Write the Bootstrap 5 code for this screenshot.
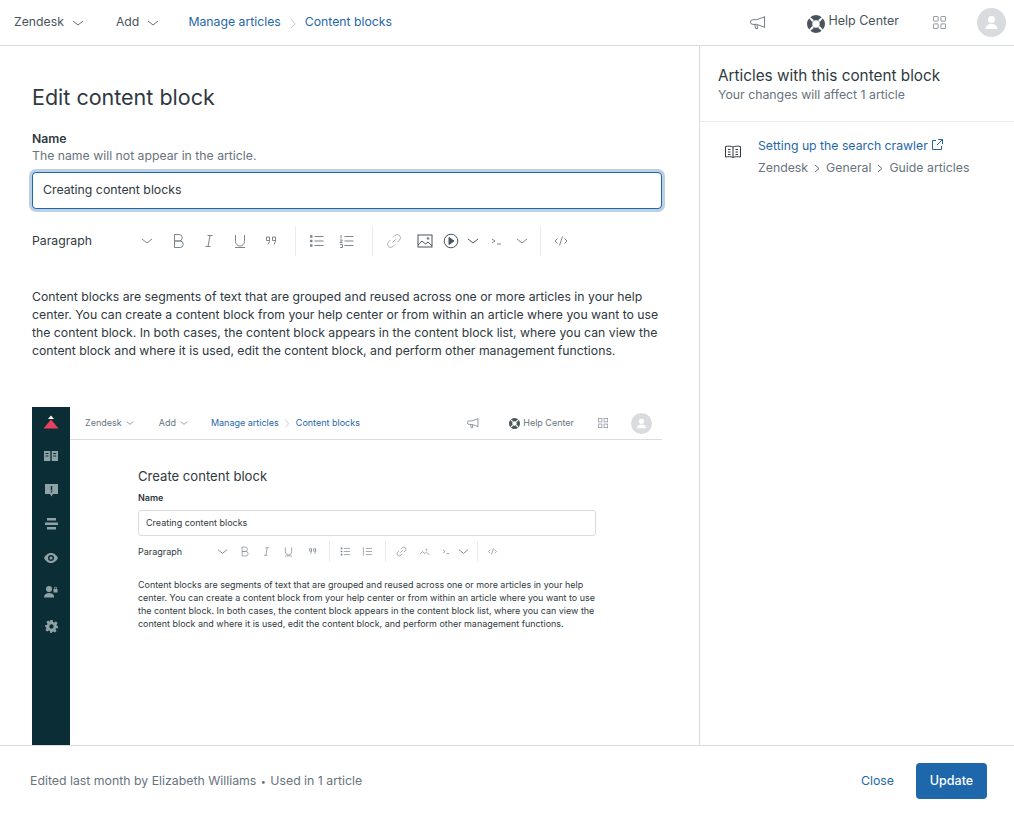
<!DOCTYPE html>
<html lang="en">
<head>
  <meta charset="UTF-8">
  <title>Edit content block</title>
  <link href="https://cdn.jsdelivr.net/npm/bootstrap@5.3.2/dist/css/bootstrap.min.css" rel="stylesheet">
  <style>
    html, body { height: 100%; }
    body { font-family: Inter, "Liberation Sans", sans-serif; font-size: 12.25px; color: #2f3941; overflow: hidden; }
    a { text-decoration: none; color: #1f67ab; }
    svg { display: block; flex: none; fill: none; stroke: currentColor; stroke-width: 1; }

    .topbar { height: 46px; border-bottom: 1px solid #d8dcde; color: #49545c; padding-left: 14px; padding-right: 8px; }
    .topbar .chev { width: 12px; height: 12px; color: #68737d; }
    .crumb-sep { color: #c2c8cc; width: 8px; height: 12px; }
    .avatar { width: 29px; height: 29px; border-radius: 50%; background: #d8dcde; color: #fff; }
    .buoy { fill: #49545c; stroke: none; }
    .grid-ico { color: #87929d; }

    .page-body { height: 699px; }
    .editor-col { width: 700px; border-right: 1px solid #d8dcde; padding: 37px 37px 0 32px; }
    .page-title { font-size: 21.5px; font-weight: 400; line-height: 28px; margin: 0 0 20px; }
    .field-label { font-weight: 600; line-height: 16px; }
    .field-hint { color: #68737d; line-height: 16px; margin-top: 1px; margin-bottom: 8px; }
    .name-input.form-control { height: 37px; border: 1px solid #1f67ab; border-radius: 4px; box-shadow: 0 0 0 3px rgba(31,103,171,.3); font-size: 12.3px; color: #2f3941; padding: 0 10px 2px; }

    .edit-tools { height: 30px; margin-top: 17px; color: #7a858e; }
    .edit-tools .para { width: 108px; color: #2f3941; }
    .tool-sep { width: 1px; height: 30px; background: #e9ebed; }
    .ico { width: 16px; height: 16px; }
    .body-copy { line-height: 18px; margin: 32px 0 0; }

    .shot { height: 338px; margin-top: 47px; overflow: hidden; }
    .shot-rail { width: 38px; background: #0b2e36; color: #8fa2a6; }
    .shot-rail svg { stroke: none; fill: currentColor; }
    .rail-slot { height: 34px; }
    .rail-slot.rail-logo { height: 30px; margin-bottom: 2px; }
    .shot-bar { height: 33px; border-bottom: 1px solid #d8dcde; color: #68737d; font-size: 9px; padding-left: 15px; }
    .shot-bar a { color: #1f67ab; }
    .shot-avatar { width: 21px; height: 21px; border-radius: 50%; background: #d8dcde; color: #fff; margin-right: 10px; }
    .shot-form { padding: 27px 0 0 68px; width: 526px; }
    .shot-title { font-size: 13.1px; line-height: 18px; margin: 0 0 7px; font-weight: 400; }
    .shot-label { font-size: 9px; font-weight: 600; line-height: 12px; margin-bottom: 6px; }
    .shot-input { height: 26px; border: 1px solid #d8dcde; border-radius: 3px; font-size: 9px; padding-left: 7px; }
    .shot-tools { height: 21px; margin-top: 5px; font-size: 9px; color: #7a858e; }
    .shot-tools .ico { width: 11px; height: 11px; }
    .shot-tools .tool-sep { height: 21px; }
    .shot-copy { font-size: 8.95px; line-height: 13px; margin: 16px 0 0; color: #2f3941; white-space: nowrap; }

    .side-col { width: 314px; }
    .side-head { padding: 19px 18px 0 18px; border-bottom: 1px solid #e9ebed; height: 76px; }
    .side-title { font-size: 15.3px; line-height: 21px; font-weight: 400; margin: 0 0 1px; }
    .side-sub { color: #68737d; font-size: 12.3px; line-height: 16px; }
    .side-item { padding: 15px 0 0 25px; }
    .side-path { color: #68737d; font-size: 12.3px; line-height: 16px; margin-top: 5px; }
    .side-path svg { margin: 0 6px; }

    .footbar { height: 69px; border-top: 1px solid #d8dcde; color: #68737d; font-size: 12.3px; padding: 2px 27px 0 30px; }
    .foot-dot { font-size: 9px; margin: 0 1px; }
    .btn.btn-update { background: #1f67ab; border: 0; color: #fff; font-size: 12.5px; font-weight: 500; width: 71px; height: 36px; border-radius: 4px; padding: 0; }
    .btn-close-link { color: #1f67ab; font-size: 12.3px; }
  </style>
</head>
<body class="bg-white">

  <!-- top nav -->
  <div class="topbar d-flex align-items-center">
    <span>Zendesk</span>
    <svg class="chev ms-2" viewBox="0 0 12 12"><path d="M1 4l5 4 5-4"/></svg>
    <span style="margin-left:32px">Add</span>
    <svg class="chev ms-2" viewBox="0 0 12 12"><path d="M1 4l5 4 5-4"/></svg>
    <a href="#" style="margin-left:29px">Manage articles</a>
    <svg class="crumb-sep mx-2" viewBox="0 0 8 12"><path d="M2 2l4 5-4 4"/></svg>
    <a href="#">Content blocks</a>

    <svg class="ms-auto" width="16" height="15" viewBox="0 0 17 16" style="color:#68737d"><path d="M15.500 1.500v12M15.500 2L7 5H3a2 2 0 0 0 0 5h4l8.500 3M5 10l1 4.500h2L7.500 10.500"/></svg>
    <svg class="buoy" style="margin-left:41px;margin-top:2px" width="18" height="18" viewBox="0 0 17 17"><path fill-rule="evenodd" d="M8.500 0a8.500 8.500 0 1 1 0 17 8.500 8.500 0 0 1 0-17zm0 5a3.500 3.500 0 1 0 0 7 3.500 3.500 0 0 0 0-7z"/><path fill="#fff" d="M1.500 2.500l1-1 4 3.500-1.500 1.500zM15.500 2.500l-1-1-4 3.500 1.500 1.500zM1.500 14.500l1 1 4-3.500-1.500-1.500zM15.500 14.500l-1 1-4-3.500 1.500-1.500z"/></svg>
    <span style="margin-left:3px;margin-bottom:3px;font-size:12.5px">Help Center</span>
    <svg class="grid-ico" style="margin-left:34px" width="13" height="13" viewBox="0 0 14 14"><rect x=".5" y=".5" width="5" height="5" rx=".5"/><rect x="8.500" y=".5" width="5" height="5" rx=".5"/><rect x=".5" y="8.500" width="5" height="5" rx=".5"/><rect x="8.500" y="8.500" width="5" height="5" rx=".5"/></svg>
    <span class="avatar d-flex align-items-center justify-content-center" style="margin-left:31px">
      <svg style="fill:#fff;stroke:none" width="15" height="15" viewBox="0 0 15 15"><circle cx="7.500" cy="4.500" r="3.500"/><path d="M1.500 14c0-3.500 2.500-5 6-5s6 1.500 6 5z"/></svg>
    </span>
  </div>

  <div class="page-body d-flex">
    <!-- editor -->
    <div class="editor-col">
      <h1 class="page-title">Edit content block</h1>
      <div class="field-label">Name</div>
      <div class="field-hint">The name will not appear in the article.</div>
      <input class="form-control name-input" type="text" value="Creating content blocks">

      <div class="edit-tools d-flex align-items-center">
        <span class="para">Paragraph</span>
        <svg width="14" height="12" viewBox="0 0 12 12"><path d="M1 4l5 4 5-4"/></svg>
        <svg class="ico" style="margin-left:16px" viewBox="0 0 16 16"><path d="M4.500 1.500h4.500a3 3 0 0 1 0 6.500H4.500zM4.500 8h5.500a3.200 3.200 0 0 1 0 6.500H4.500z"/></svg>
        <svg class="ico" style="margin-left:15px" viewBox="0 0 16 16"><path d="M6.500 2.500h5M4.500 13.500h5M9 2.500L7 13.500"/></svg>
        <svg class="ico" style="margin-left:15px" viewBox="0 0 16 16"><path d="M3.500 2v6.500a4.500 4.500 0 0 0 9 0V2M3 14.500h10"/></svg>
        <svg class="ico" style="margin-left:15px" viewBox="0 0 16 16"><path d="M3.500 4h3v3.500h-3zM6.500 4v4.500L5 11.500M9.500 4h3v3.500h-3zM12.500 4v4.500L11 11.500"/></svg>
        <span class="tool-sep" style="margin-left:16px"></span>
        <svg class="ico" style="margin-left:13px" viewBox="0 0 16 16"><path d="M5.500 3.500h9M5.500 8h9M5.500 12.500h9"/><path stroke-width="2.500" d="M1 3.500h2.500M1 8h2.500M1 12.500h2.500"/></svg>
        <svg class="ico" style="margin-left:14px" viewBox="0 0 16 16"><path d="M5.500 3.500h9M5.500 8h9M5.500 12.500h9M2 2v3.500M1 7h2.500L1 9.500h2.500M1 11.500h2.500v3H1"/></svg>
        <span class="tool-sep" style="margin-left:17px"></span>
        <svg class="ico" style="margin-left:13px;color:#a9b2b8" viewBox="0 0 16 16"><path d="M6.500 9.500l3-3M7 4.500l2-2a3 3 0 0 1 4.500 4.500l-2 2M9 11.500l-2 2A3 3 0 0 1 2.500 9l2-2"/></svg>
        <svg class="ico" style="margin-left:15px;color:#49545c" viewBox="0 0 16 16"><rect x="1" y="2" width="14" height="12"/><path d="M1 12l4-4 3.500 3 2.500-2 4 4"/><circle cx="11" cy="5.500" r=".8"/></svg>
        <svg class="ico" style="margin-left:10px;color:#49545c" viewBox="0 0 16 16"><circle cx="8" cy="8" r="6.800"/><path fill="currentColor" d="M6 4.500l5 3.500-5 3.500z"/></svg>
        <svg class="ico" style="margin-left:8px;width:12px;color:#49545c" viewBox="0 0 12 16"><path d="M1 6l5 4 5-4"/></svg>
        <svg class="ico" style="margin-left:12px;width:12px" viewBox="0 0 12 16"><path d="M1 6l3 2-3 2M6 11h4"/></svg>
        <svg class="ico" style="margin-left:13px;width:12px" viewBox="0 0 12 16"><path d="M1 6l5 4 5-4"/></svg>
        <span class="tool-sep" style="margin-left:12px"></span>
        <svg class="ico" style="margin-left:12px" viewBox="0 0 16 16"><path d="M4.500 5.500L2 8l2.500 2.500M11.500 5.500L14 8l-2.500 2.500M9.500 3.500l-3 9"/></svg>
      </div>

      <p class="body-copy">Content blocks are segments of text that are grouped and reused across one or more articles in your help center. You can create a content block from your help center or from within an article where you want to use the content block. In both cases, the content block appears in the content block list, where you can view the content block and where it is used, edit the content block, and perform other management functions.</p>

      <!-- screenshot embedded in the article body -->
      <div class="shot d-flex">
        <div class="shot-rail d-flex flex-column align-items-center">
          <div class="rail-slot rail-logo d-flex align-items-center"><svg width="16" height="15" viewBox="0 0 16 15"><path fill="#fff" d="M8 .5L11 4H5z"/><path fill="#e8405e" d="M8 4.500L15.500 13.500H.5z"/></svg></div>
          <div class="rail-slot d-flex align-items-center"><svg width="14" height="12" viewBox="0 0 14 12"><path fill-rule="evenodd" d="M0 1h6.300v10H0zM7.700 1H14v10H7.700zM1.500 3v1h3V3zM1.500 5.500v1h3v-1zM9.200 3v1h3V3zM9.200 5.500v1h3v-1z"/></svg></div>
          <div class="rail-slot d-flex align-items-center"><svg width="13" height="13" viewBox="0 0 13 13"><path fill-rule="evenodd" d="M0 0h13v10H8l-1.500 2.500L5 10H0zM5.800 2v4.500h1.400V2zM5.800 7.300v1.300h1.400V7.300z"/></svg></div>
          <div class="rail-slot d-flex align-items-center"><svg width="13" height="12" viewBox="0 0 13 12"><path d="M2 0h9v2.500H2zM0 4.500h13V7H0zM2 9h9v2.500H2z"/></svg></div>
          <div class="rail-slot d-flex align-items-center"><svg width="14" height="10" viewBox="0 0 14 10"><path fill-rule="evenodd" d="M7 0c3.500 0 6 2.800 7 5-1 2.200-3.500 5-7 5S1 7.200 0 5c1-2.200 3.500-5 7-5zm0 2a3 3 0 1 0 0 6 3 3 0 0 0 0-6z"/><circle cx="7" cy="5" r="1.500"/></svg></div>
          <div class="rail-slot d-flex align-items-center"><svg width="14" height="12" viewBox="0 0 14 12"><circle cx="5" cy="3" r="3"/><path d="M0 11.500c0-3 2.200-4.500 5-4.500s4.500 1 5 3v1.500zM9.500 3h4v3.500h-4zM10.200 3V2a1.300 1.300 0 0 1 2.600 0v1h-.7V2a.6.6 0 0 0-1.200 0v1z"/></svg></div>
          <div class="rail-slot d-flex align-items-center"><svg width="13" height="13" viewBox="0 0 13 13"><path fill-rule="evenodd" d="M5.300 0h2.400l.3 1.900 1.300.6 1.600-1.100 1.700 1.700-1.100 1.600.6 1.300 1.900.3v2.400L11.100 8l-.6 1.300 1.100 1.600-1.700 1.700-1.600-1.100-1.300.6-.3 1.900H5.300L5 11.100l-1.300-.6-1.600 1.100L.4 9.900l1.100-1.600L.9 7 0 6.700V5.300l1.900-.3.6-1.300L1.400 2.100 3.100.4l1.600 1.100L5 1.900z M6.500 4.300a2.200 2.200 0 1 0 0 4.400 2.200 2.200 0 0 0 0-4.400z"/></svg></div>
        </div>
        <div class="flex-grow-1">
          <div class="shot-bar d-flex align-items-center">
            <span>Zendesk</span>
            <svg class="ms-1" width="8" height="8" viewBox="0 0 12 12"><path d="M1 4l5 4 5-4"/></svg>
            <span style="margin-left:25px">Add</span>
            <svg class="ms-1" width="8" height="8" viewBox="0 0 12 12"><path d="M1 4l5 4 5-4"/></svg>
            <a href="#" style="margin-left:23px">Manage articles</a>
            <svg class="crumb-sep" style="margin:0 4.500px;width:8px;height:10px" viewBox="0 0 8 12"><path d="M2 2l4 5-4 4"/></svg>
            <a href="#">Content blocks</a>
            <svg class="ms-auto" width="12" height="12" viewBox="0 0 17 16"><path d="M15.500 1.500v12M15.500 2L7 5H3a2 2 0 0 0 0 5h4l8.500 3M5 10l1 4.500h2L7.500 10.500"/></svg>
            <svg class="buoy" style="margin-left:30px" width="11" height="11" viewBox="0 0 17 17"><path fill-rule="evenodd" d="M8.500 0a8.500 8.500 0 1 1 0 17 8.500 8.500 0 0 1 0-17zm0 5a3.500 3.500 0 1 0 0 7 3.500 3.500 0 0 0 0-7z"/><path fill="#fff" d="M1.500 2.500l1-1 4 3.500-1.500 1.500zM15.500 2.500l-1-1-4 3.500 1.500 1.500zM1.500 14.500l1 1 4-3.500-1.500-1.500zM15.500 14.500l-1 1-4-3.500 1.500-1.500z"/></svg>
            <span style="margin-left:3px">Help Center</span>
            <svg class="grid-ico" style="margin-left:24px" width="10" height="10" viewBox="0 0 14 14"><rect x=".5" y=".5" width="5" height="5"/><rect x="8.500" y=".5" width="5" height="5"/><rect x=".5" y="8.500" width="5" height="5"/><rect x="8.500" y="8.500" width="5" height="5"/></svg>
            <span class="shot-avatar d-flex align-items-center justify-content-center" style="margin-left:23px">
              <svg style="fill:#fff;stroke:none" width="11" height="11" viewBox="0 0 15 15"><circle cx="7.500" cy="4.500" r="3.500"/><path d="M1.500 14c0-3.500 2.500-5 6-5s6 1.500 6 5z"/></svg>
            </span>
          </div>
          <div class="shot-form">
            <div class="shot-title">Create content block</div>
            <div class="shot-label">Name</div>
            <div class="shot-input d-flex align-items-center">Creating content blocks</div>
            <div class="shot-tools d-flex align-items-center">
              <span style="width:79px;color:#2f3941">Paragraph</span>
              <svg class="ico" viewBox="0 0 12 12"><path d="M1 4l5 4 5-4"/></svg>
              <svg class="ico" style="margin-left:11px" viewBox="0 0 16 16"><path d="M4.500 1.500h4.500a3 3 0 0 1 0 6.500H4.500zM4.500 8h5.500a3.200 3.200 0 0 1 0 6.500H4.500z"/></svg>
              <svg class="ico" style="margin-left:11px" viewBox="0 0 16 16"><path d="M6.500 2.500h5M4.500 13.500h5M9 2.500L7 13.500"/></svg>
              <svg class="ico" style="margin-left:11px" viewBox="0 0 16 16"><path d="M3.500 2v6.500a4.500 4.500 0 0 0 9 0V2M3 14.500h10"/></svg>
              <svg class="ico" style="margin-left:13px" viewBox="0 0 16 16"><path d="M3.500 4h3v3.500h-3zM6.500 4v4.500L5 11.500M9.500 4h3v3.500h-3zM12.500 4v4.500L11 11.500"/></svg>
              <span class="tool-sep" style="margin-left:11px"></span>
              <svg class="ico" style="margin-left:10px" viewBox="0 0 16 16"><path d="M5.500 3.500h9M5.500 8h9M5.500 12.500h9"/><path stroke-width="2.500" d="M1 3.500h2.500M1 8h2.500M1 12.500h2.500"/></svg>
              <svg class="ico" style="margin-left:11px" viewBox="0 0 16 16"><path d="M5.500 3.500h9M5.500 8h9M5.500 12.500h9M2 2v12"/></svg>
              <span class="tool-sep" style="margin-left:12px"></span>
              <svg class="ico" style="margin-left:10px" viewBox="0 0 16 16"><path d="M6.500 9.500l3-3M7 4.500l2-2a3 3 0 0 1 4.500 4.500l-2 2M9 11.500l-2 2A3 3 0 0 1 2.500 9l2-2"/></svg>
              <svg class="ico" style="margin-left:12px" viewBox="0 0 16 16"><path d="M1 12l4-4 3.500 3 2.500-2 4 4"/><circle cx="11" cy="5.500" r=".8"/></svg>
              <svg class="ico" style="margin-left:11px" viewBox="0 0 12 16"><path d="M1 6l3 2-3 2M6 11h4"/></svg>
              <svg class="ico" style="margin-left:6px" viewBox="0 0 12 12"><path d="M1 4l5 4 5-4"/></svg>
              <span class="tool-sep" style="margin-left:8px"></span>
              <svg class="ico" style="margin-left:9px" viewBox="0 0 16 16"><path d="M4.500 5.500L2 8l2.500 2.500M11.500 5.500L14 8l-2.500 2.500M9.500 3.500l-3 9"/></svg>
            </div>
            <p class="shot-copy">Content blocks are segments of text that are grouped and reused across one or more articles in your help<br>center. You can create a content block from your help center or from within an article where you want to use<br>the content block. In both cases, the content block appears in the content block list, where you can view the<br>content block and where it is used, edit the content block, and perform other management functions.</p>
          </div>
        </div>
      </div>
    </div>

    <!-- right panel -->
    <div class="side-col">
      <div class="side-head">
        <h2 class="side-title">Articles with this content block</h2>
        <div class="side-sub">Your changes will affect 1 article</div>
      </div>
      <div class="side-item d-flex">
        <svg class="mt-2" width="16" height="14" viewBox="0 0 16 14" style="color:#2f3941"><path d="M8 2C6.500 1 3 1 .5 1.500v10.500C3 11.500 6.500 11.500 8 12.500c1.500-1 5-1 7.500-.5v-10.500C13 1 9.500 1 8 2zM8 2v10.500M3 4.500h2.500M3 7h2.500M3 9.500h2.500M10.500 4.500H13M10.500 7H13M10.500 9.500H13"/></svg>
        <div style="margin-left:17px">
          <a href="#" class="d-flex align-items-center">Setting up the search crawler
            <svg class="ms-1 mb-1" width="11" height="11" viewBox="0 0 11 11"><path d="M4 1.500H.5v9h9V7M6 .5h4.500V5M10.500 .5L5 6"/></svg>
          </a>
          <div class="side-path d-flex align-items-center">
            Zendesk
            <svg width="6" height="9" viewBox="0 0 6 9"><path d="M1 1l4 3.500L1 8"/></svg>
            General
            <svg width="6" height="9" viewBox="0 0 6 9"><path d="M1 1l4 3.500L1 8"/></svg>
            Guide articles
          </div>
        </div>
      </div>
    </div>
  </div>

  <!-- bottom bar -->
  <div class="footbar d-flex align-items-center">
    <span>Edited last month by Elizabeth Williams <span class="foot-dot">&bull;</span> Used in 1 article</span>
    <a href="#" class="btn-close-link ms-auto" style="margin-right:22px">Close</a>
    <button type="button" class="btn btn-update">Update</button>
  </div>
</body>
</html>
